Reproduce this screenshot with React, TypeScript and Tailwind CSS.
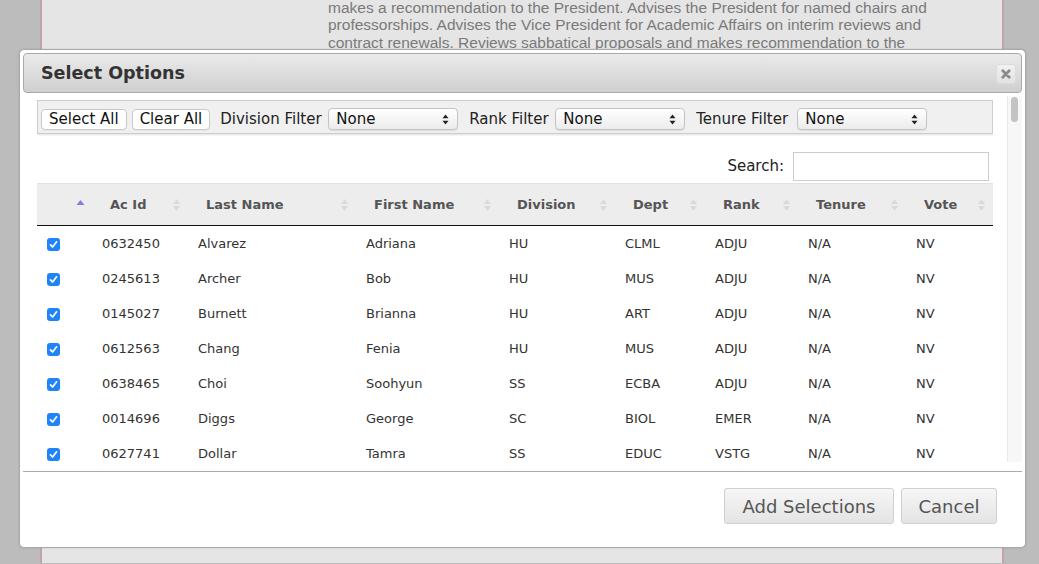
import React from "react"

type Row = {
    id: string
    last: string
    first: string
    division: string
    dept: string
    rank: string
    tenure: string
    vote: string
}

const rows: Row[] = [
    { id: "0632450", last: "Alvarez", first: "Adriana", division: "HU", dept: "CLML", rank: "ADJU", tenure: "N/A", vote: "NV" },
    { id: "0245613", last: "Archer", first: "Bob", division: "HU", dept: "MUS", rank: "ADJU", tenure: "N/A", vote: "NV" },
    { id: "0145027", last: "Burnett", first: "Brianna", division: "HU", dept: "ART", rank: "ADJU", tenure: "N/A", vote: "NV" },
    { id: "0612563", last: "Chang", first: "Fenia", division: "HU", dept: "MUS", rank: "ADJU", tenure: "N/A", vote: "NV" },
    { id: "0638465", last: "Choi", first: "Soohyun", division: "SS", dept: "ECBA", rank: "ADJU", tenure: "N/A", vote: "NV" },
    { id: "0014696", last: "Diggs", first: "George", division: "SC", dept: "BIOL", rank: "EMER", tenure: "N/A", vote: "NV" },
    { id: "0627741", last: "Dollar", first: "Tamra", division: "SS", dept: "EDUC", rank: "VSTG", tenure: "N/A", vote: "NV" },
]

const columns = [
    { label: "", width: "w-[55px]" },
    { label: "Ac Id", width: "w-[96px]" },
    { label: "Last Name", width: "w-[168px]" },
    { label: "First Name", width: "w-[143px]" },
    { label: "Division", width: "w-[116px]" },
    { label: "Dept", width: "w-[90px]" },
    { label: "Rank", width: "w-[93px]" },
    { label: "Tenure", width: "w-[108px]" },
    { label: "Vote", width: "w-[87px]" },
]

function SortIcon({ asc }: { asc?: boolean }) {
    if (asc) {
        return (
            <svg width="9" height="14" viewBox="0 0 9 14" className="absolute right-[7px] top-1/2 -translate-y-1/2">
                <path d="M4.5 2 L8.5 7 L0.5 7 Z" fill="#7f7fdf" />
            </svg>
        )
    }
    return (
        <svg width="9" height="14" viewBox="0 0 9 14" className="absolute right-[7px] top-1/2 -translate-y-1/2">
            <path d="M4.5 1 L8 6 L1 6 Z" fill="#dadada" />
            <path d="M4.5 13 L8 8 L1 8 Z" fill="#dadada" />
        </svg>
    )
}

function Check() {
    return (
        <span className="inline-flex w-[13px] h-[13px] rounded-[3px] bg-[#1f84f7] items-center justify-center align-middle">
            <svg width="9" height="9" viewBox="0 0 9 9">
                <path d="M1.5 4.8 L3.6 7 L7.6 1.8" stroke="white" strokeWidth="1.7" fill="none" strokeLinecap="round" strokeLinejoin="round" />
            </svg>
        </span>
    )
}

function FilterSelect() {
    return (
        <div className="w-[130px] h-[22px] rounded-[4px] border border-[#c4c4c4] bg-gradient-to-b from-[#ffffff] to-[#ececec] shadow-[0_1px_1px_rgba(0,0,0,0.08)] flex items-center justify-between pl-[7px] pr-[8px]">
            <span className="text-[15px] text-[#111] leading-none">None</span>
            <svg width="7" height="11" viewBox="0 0 7 11">
                <path d="M3.5 0.5 L6.5 4.3 L0.5 4.3 Z" fill="#222" />
                <path d="M3.5 10.5 L6.5 6.7 L0.5 6.7 Z" fill="#222" />
            </svg>
        </div>
    )
}

function ToolButton({ children }: { children: React.ReactNode }) {
    return (
        <button className="h-[21px] px-[7px] rounded-[4px] border border-[#c9c9c9] bg-white text-[15px] text-[#111] leading-none shadow-[0_1px_0_rgba(0,0,0,0.04)]">
            {children}
        </button>
    )
}

export default function App() {
    return (
        <div className="relative w-[1039px] h-[564px] overflow-hidden bg-[#bcbcbc] font-['Liberation_Sans',Arial,sans-serif]">
            {/* page behind the overlay */}
            <div className="ml-[40px] w-[964px] h-full bg-[#e5e5e5] border-l-2 border-r-2 border-[#c4a3a8]">
                <div className="pl-[286px] -mt-[1px] text-[15.5px] leading-[17.3px] text-[#7a7a7a] whitespace-nowrap">
                    <div>makes a recommendation to the President. Advises the President for named chairs and</div>
                    <div>professorships. Advises the Vice President for Academic Affairs on interim reviews and</div>
                    <div>contract renewals. Reviews sabbatical proposals and makes recommendation to the</div>
                </div>
            </div>

            {/* dialog */}
            <div className="absolute left-[19px] top-[49px] w-[1007px] h-[499px] bg-white border border-[#a9a9a9] rounded-[5px] p-[3px] flex flex-col font-['DejaVu_Sans',Verdana,sans-serif] shadow-[0_0_2px_rgba(0,0,0,0.15)]">
                <div className="h-[40px] shrink-0 rounded-[4px] border border-[#aaaaaa] bg-gradient-to-b from-[#ebebeb] to-[#cfcfcf] flex items-center justify-between pl-[17px] pr-[5px] pt-[1px]">
                    <span className="text-[17.5px] font-bold text-[#333]">Select Options</span>
                    <button className="w-[20px] h-[20px] rounded-[3px] border border-[#dcdcdc] bg-gradient-to-b from-[#f2f2f2] to-[#e2e2e2] flex items-center justify-center">
                        <svg width="10" height="10" viewBox="0 0 10 10">
                            <path d="M1.8 1.8 L8.2 8.2 M8.2 1.8 L1.8 8.2" stroke="#8a8a8a" strokeWidth="2.8" strokeLinecap="round" />
                        </svg>
                    </button>
                </div>

                <div className="mt-[3px] h-[375px] shrink-0 flex">
                    <div className="ml-[14px] w-[956px] overflow-hidden pt-[4px]">
                        <div className="h-[34px] border border-[#cdcdcd] bg-[#f0f0f0] shadow-[0_1px_2px_rgba(0,0,0,0.12)] flex items-center pl-[3px] pt-[4px] gap-[5px]">
                            <ToolButton>Select All</ToolButton>
                            <ToolButton>Clear All</ToolButton>
                            <span className="ml-[5px] w-[103px] text-[15px] text-[#222] whitespace-nowrap">Division Filter</span>
                            <FilterSelect />
                            <span className="ml-[6px] w-[81px] text-[15px] text-[#222] whitespace-nowrap">Rank Filter</span>
                            <FilterSelect />
                            <span className="ml-[6px] w-[96px] text-[15px] text-[#222] whitespace-nowrap">Tenure Filter</span>
                            <FilterSelect />
                        </div>

                        <div className="mt-[18px] flex justify-end items-center pr-[4px] gap-[9px]">
                            <span className="text-[15px] text-[#222]">Search:</span>
                            <div className="w-[196px] h-[29px] border border-[#cccccc] bg-white" />
                        </div>

                        <table className="mt-[2px] w-[956px] table-fixed border-collapse">
                            <colgroup>
                                {columns.map((c, i) => (
                                    <col key={i} className={c.width} />
                                ))}
                            </colgroup>
                            <thead>
                                <tr className="bg-[#ededed] border-t border-[#e2e2e2]">
                                    {columns.map((c, i) => (
                                        <th key={i} className="relative h-[42px] pl-[18px] text-left text-[13px] font-bold text-[#555] border-b border-[#111]">
                                            {c.label}
                                            <SortIcon asc={i === 0} />
                                        </th>
                                    ))}
                                </tr>
                            </thead>
                            <tbody>
                                {rows.map((r) => (
                                    <tr key={r.id} className="h-[35.2px] text-[13px] text-[#333]">
                                        <td className="pl-[10px]"><Check /></td>
                                        <td className="pl-[10px]">{r.id}</td>
                                        <td className="pl-[10px]">{r.last}</td>
                                        <td className="pl-[10px]">{r.first}</td>
                                        <td className="pl-[10px]">{r.division}</td>
                                        <td className="pl-[10px]">{r.dept}</td>
                                        <td className="pl-[10px]">{r.rank}</td>
                                        <td className="pl-[10px]">{r.tenure}</td>
                                        <td className="pl-[10px]">{r.vote}</td>
                                    </tr>
                                ))}
                            </tbody>
                        </table>
                    </div>

                    <div className="ml-[14px] w-[15px] h-[366px] bg-[#f7f7f7] border-l border-[#e9e9e9] pt-[1px] pl-[3px]">
                        <div className="w-[7px] h-[25px] rounded-full bg-[#c3c3c3]" />
                    </div>
                </div>

                <div className="flex-1 border-t border-[#aaaaaa] flex justify-end items-start pt-[16px] pr-[25px] gap-[7px]">
                    <button className="w-[170px] h-[36px] rounded-[3px] border border-[#cfcfcf] bg-gradient-to-b from-[#f6f6f6] to-[#e4e4e4] text-[18px] text-[#555]">
                        Add Selections
                    </button>
                    <button className="w-[96px] h-[36px] rounded-[3px] border border-[#cfcfcf] bg-gradient-to-b from-[#f6f6f6] to-[#e4e4e4] text-[18px] text-[#555]">
                        Cancel
                    </button>
                </div>
            </div>
        </div>
    )
}
